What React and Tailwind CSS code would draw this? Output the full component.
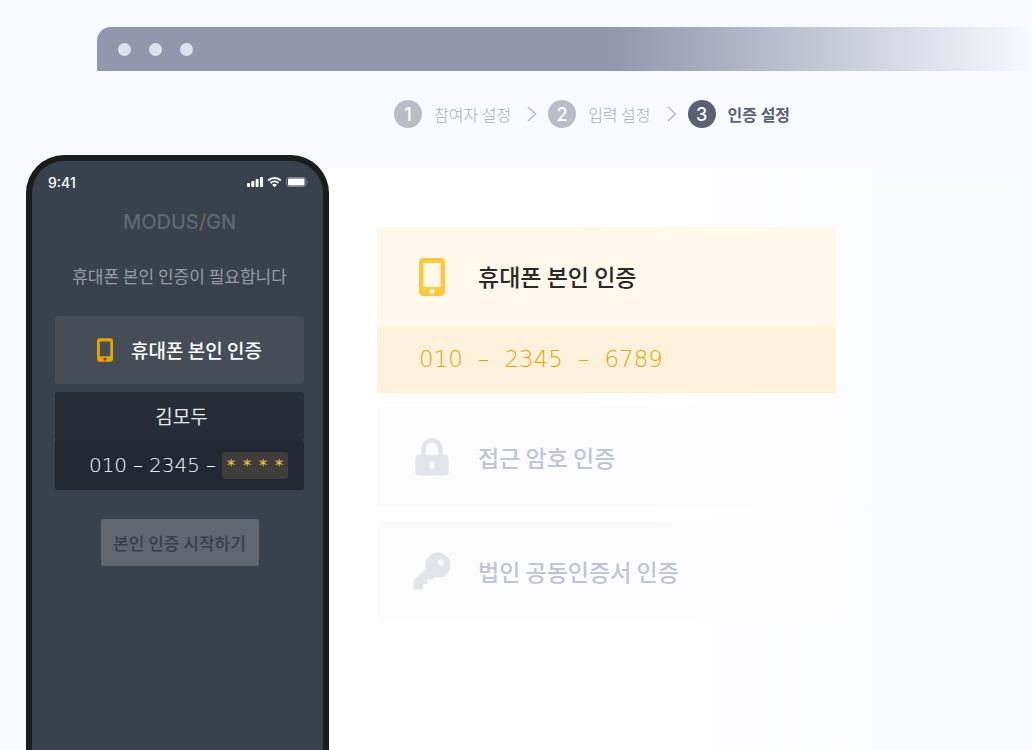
import React from 'react';

const steps = ['참여자 설정', '입력 설정', '인증 설정'];

const PhoneIcon = ({ className }) => (
  <svg viewBox="0 0 26 38" className={className} fill="currentColor" aria-hidden="true">
    <path
      fillRule="evenodd"
      d="M4 0h18a4 4 0 0 1 4 4v30a4 4 0 0 1-4 4H4a4 4 0 0 1-4-4V4a4 4 0 0 1 4-4ZM4.500 5v24h17V5ZM13 31a2.500 2.500 0 1 0 0 5 2.500 2.500 0 0 0 0-5Z"
    />
  </svg>
);

const LockIcon = () => (
  <svg viewBox="0 0 34 38" className="h-[38px] w-[34px]" aria-hidden="true">
    <path d="M8.500 18v-7a8.500 8.500 0 0 1 17 0v7" fill="none" stroke="currentColor" strokeWidth="4.500" />
    <path
      fill="currentColor"
      fillRule="evenodd"
      d="M4 17h26a3.500 3.500 0 0 1 3.500 3.500V34a3.500 3.500 0 0 1-3.500 3.500H4A3.500 3.500 0 0 1 .5 34V20.500A3.500 3.500 0 0 1 4 17ZM17 23.500a2.500 2.500 0 0 0-2.500 2.500v2.500a2.500 2.500 0 0 0 5 0V26a2.500 2.500 0 0 0-2.500-2.500Z"
    />
  </svg>
);

const KeyIcon = () => (
  <svg viewBox="0 0 38 38" className="h-[38px] w-[38px]" fill="currentColor" aria-hidden="true">
    <path
      fillRule="evenodd"
      d="M25 .5a12.500 12.500 0 1 1-3.500 24.500L20 27.500h-5.500V32H10v4.500q0 1-1 1H1.500q-1 0-1-1V28.500L13 16.500A12.500 12.500 0 0 1 25 .5ZM28 7.500a3 3 0 1 0 0 6 3 3 0 0 0 0-6Z"
    />
  </svg>
);

const Chevron = () => (
  <svg viewBox="0 0 10 16" className="h-4 w-[10px]" fill="none" aria-hidden="true">
    <path d="M1 1l7.500 7L1 15" stroke="#b9bac5" strokeWidth="1.600" />
  </svg>
);

const StatusIcons = () => (
  <svg viewBox="0 0 61 12" className="h-3 w-[61px]" aria-hidden="true">
    <g fill="#fff">
      <rect x="0" y="7" width="3" height="4" rx="1" />
      <rect x="4.300" y="5" width="3" height="6" rx="1" />
      <rect x="8.600" y="3" width="3" height="8" rx="1" />
      <rect x="13" y="1" width="3" height="10" rx="1" />
      <path d="M27.500 11.200l-2.400-2.500a3.600 3.600 0 0 1 4.800 0Z" />
    </g>
    <g fill="none" stroke="#fff" strokeWidth="1.900">
      <path d="M21.200 4.500a9 9 0 0 1 12.600 0" />
      <path d="M23.500 7a5.800 5.800 0 0 1 8 0" />
    </g>
    <rect x="39.500" y="1.500" width="19.500" height="9" rx="2.500" fill="none" stroke="#fff" strokeOpacity="0.35" />
    <rect x="41" y="2.500" width="16.500" height="7" rx="1" fill="#fff" />
    <path d="M60 4.500q1.500 1.500 0 3Z" fill="#fff" fillOpacity="0.4" />
  </svg>
);

const OptionCard = ({ icon, label }) => (
  <button className="flex h-[100px] w-full items-center gap-[27px] rounded-[3px] bg-[#fcfcfc] pl-9 text-left text-[23px] font-medium text-[#c0c4d8]">
    <span className="flex w-[38px] justify-center text-[#e2e4ec]">{icon}</span>
    {label}
  </button>
);

const Phone = () => (
  <section className="relative z-10 flex w-[303px] shrink-0 flex-col rounded-t-[38px] border-6 border-b-0 border-[#1b1c1c] bg-[#38424e] pr-[19px] pl-[23px]">
    <div className="-mr-1 -ml-[7px] mt-[11px] flex h-5 items-center justify-between">
      <span className="font-['Inter',sans-serif] text-[14px] font-medium text-white">9:41</span>
      <StatusIcons />
    </div>
    <div className="mt-[17px] text-center font-['Inter',sans-serif] text-[20px] leading-[26px] font-medium text-[#606870]">
      MODUS<span className="text-[#756546]">/</span>GN
    </div>
    <p className="mt-[27px] text-center text-[17px] leading-7 whitespace-nowrap text-[#989ca2]">
      휴대폰 본인 인증이 필요합니다
    </p>
    <button className="mt-[26px] flex h-[68px] items-center justify-center gap-[18px] rounded-[3px] bg-[#464d57] text-[19px] font-medium text-white">
      <PhoneIcon className="h-6 w-4 text-[#e8a500]" />
      휴대폰 본인 인증
    </button>
    <div className="mt-2 flex h-12 items-center justify-center rounded-[3px] bg-[#262d36] pl-1 text-[19px] text-[#e9eaeb]">
      김모두
    </div>
    <div className="flex h-[50px] items-center justify-end gap-[6px] rounded-[3px] bg-[#212831] pr-4 font-['DejaVu_Sans',sans-serif] text-[20px] font-extralight text-white">
      <span>010</span>
      <span>–</span>
      <span>2345</span>
      <span>–</span>
      <span className="flex h-[27px] w-[66px] items-center justify-between rounded-[3px] bg-[#3e3d39] px-[5px] pt-[2px] text-[16px] font-medium text-[#ffc83d]">
        <span>*</span>
        <span>*</span>
        <span>*</span>
        <span>*</span>
      </span>
    </div>
    <button className="mt-[29px] h-[47px] w-[158px] self-center rounded-[3px] bg-[#60676f] text-[17px] font-medium text-[#373f4a]">
      본인 인증 시작하기
    </button>
  </section>
);

const App = () => (
  <div className="flex min-h-screen flex-col overflow-hidden bg-[#f9faff] pt-[27px] font-['Noto_Sans_CJK_KR',sans-serif]">
    <header className="ml-[97px] flex h-11 items-center gap-[18px] rounded-tl-[14px] bg-linear-to-r from-[#9397ae] from-55% to-[#f9faff] pl-[21px]">
      <span className="size-[13px] rounded-full bg-[#dfe1ec]" />
      <span className="size-[13px] rounded-full bg-[#dfe1ec]" />
      <span className="size-[13px] rounded-full bg-[#dfe1ec]" />
    </header>

    <ol className="mt-[29px] flex h-7 items-center gap-[11px] pl-[394px] text-[16px] whitespace-nowrap">
      {steps.map((step, i) => {
        const active = i === 2;
        return (
          <li key={step} className="flex items-center gap-4">
            <span className={`flex items-center gap-3 ${active ? 'font-bold text-[#5c6075]' : 'font-light text-[#abacb9]'}`}>
              <span
                className={`flex size-7 items-center justify-center rounded-full font-['Inter',sans-serif] text-[18px] font-medium text-white ${active ? 'bg-[#5c6075]' : 'bg-[#bbbcc7]'}`}
              >
                {i + 1}
              </span>
              {step}
            </span>
            {!active && <Chevron />}
          </li>
        );
      })}
    </ol>

    <main className="mt-[27px] flex grow">
      <div className="w-[26px] shrink-0" />
      <Phone />
      <div className="-ml-10 mt-[13px] grow bg-linear-to-r from-white from-40% to-[#f9faff] pt-[59px] pr-8 pl-[88px]">
        <div className="flex max-w-[459px] flex-col gap-[14px]">
          <section>
            <button className="flex h-[99px] w-full items-center gap-[27px] rounded-t-[3px] bg-[#fff8eb] pl-9 text-left text-[23px] font-medium text-[#292929]">
              <span className="flex w-[38px] justify-center text-[#ffc83d]">
                <PhoneIcon className="h-[38px] w-[26px]" />
              </span>
              휴대폰 본인 인증
            </button>
            <div className="flex h-[67px] items-center gap-[15px] rounded-b-[3px] bg-[#fff1dc] pl-[42px] font-['DejaVu_Sans',sans-serif] text-[23px] font-extralight text-[#e8a500]">
              <span>010</span>
              <span>–</span>
              <span>2345</span>
              <span>–</span>
              <span>6789</span>
            </div>
          </section>
          <OptionCard icon={<LockIcon />} label="접근 암호 인증" />
          <OptionCard icon={<KeyIcon />} label="법인 공동인증서 인증" />
        </div>
      </div>
    </main>
  </div>
);

export default App;
